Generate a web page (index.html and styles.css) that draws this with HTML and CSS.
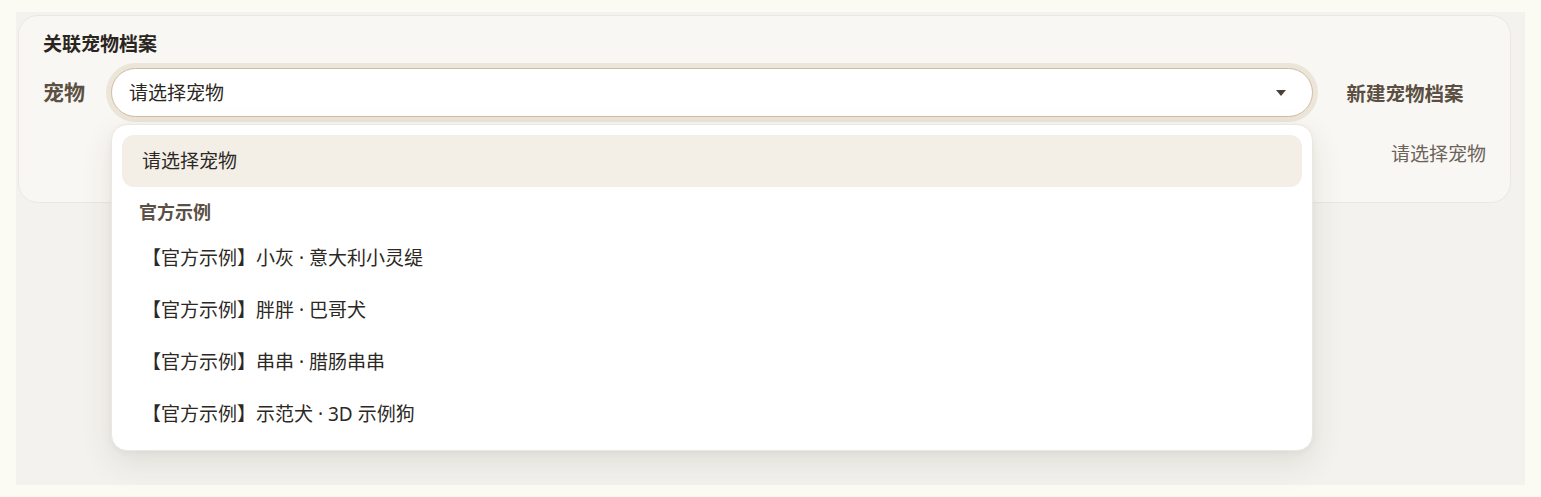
FILE: index.html
```html
<!DOCTYPE html>
<html lang="zh-CN">
<head>
<meta charset="utf-8">
<title>关联宠物档案</title>
<link rel="stylesheet" href="styles.css">
</head>
<body>
<div class="panel">
  <section class="card">
    <h2 class="card-title">关联宠物档案</h2>
    <div class="pet-row">
      <label class="pet-label">宠物</label>
      <div class="select-wrap">
        <div class="select">
          <span class="select-value">请选择宠物</span>
          <span class="caret"></span>
        </div>
        <div class="dropdown">
          <div class="option active">请选择宠物</div>
          <div class="group-label">官方示例</div>
          <div class="option">【官方示例】小灰 · 意大利小灵缇</div>
          <div class="option">【官方示例】胖胖 · 巴哥犬</div>
          <div class="option">【官方示例】串串 · 腊肠串串</div>
          <div class="option">【官方示例】示范犬 · 3D 示例狗</div>
        </div>
      </div>
      <button class="new-btn" type="button">新建宠物档案</button>
    </div>
    <div class="hint">请选择宠物</div>
  </section>
</div>
</body>
</html>
```
FILE: styles.css
```css
* { box-sizing: border-box; }
html, body { margin: 0; padding: 0; }
body {
  background: #fbfaf3;
  font-family: "Noto Sans", "Noto Sans CJK SC", sans-serif;
  color: #2b2723;
}
.panel {
  margin: 12px 16px;
  height: 473px;
  background: #f3f2ee;
  padding: 3px 14px 0 2px;
}
.card {
  background: #f8f7f3;
  border: 1px solid #ebe8e1;
  border-radius: 20px;
  padding: 14px 23px 34px 24px;
}
.card-title {
  margin: 0;
  font-size: 19px;
  line-height: 28px;
  font-weight: 700;
  color: #2a2521;
}
.pet-row {
  margin-top: 10px;
  display: flex;
  align-items: center;
}
.pet-label {
  width: 68px;
  font-size: 21px;
  font-weight: 700;
  color: #5b5042;
  line-height: 30px;
  padding-bottom: 1px;
}
.select-wrap {
  position: relative;
  flex: 1;
}
.select {
  height: 49px;
  border: 1.5px solid #cfbd9f;
  border-radius: 25px;
  background: #fff;
  box-shadow: 0 0 0 5px #ebe5da;
  display: flex;
  align-items: center;
  justify-content: space-between;
  padding: 0 26px 0 17px;
}
.select-value {
  font-size: 19px;
  line-height: 28px;
  color: #2a2622;
}
.caret {
  width: 0;
  height: 0;
  border-left: 5.5px solid transparent;
  border-right: 5.5px solid transparent;
  border-top: 6px solid #4a4239;
}
.dropdown {
  position: absolute;
  left: 0;
  right: 0;
  top: 56px;
  background: #fff;
  border: 1px solid #ebe8e2;
  border-radius: 16px;
  padding: 10px;
  box-shadow: 0 12px 32px rgba(60, 50, 30, 0.10), 0 2px 6px rgba(60, 50, 30, 0.05);
  z-index: 10;
}
.option {
  height: 52px;
  display: flex;
  align-items: center;
  padding: 0 0 1px 20px;
  font-size: 19px;
  line-height: 28px;
  color: #2c2925;
  border-radius: 12px;
}
.option.active {
  background: #f3efe7;
}
.group-label {
  height: 45px;
  display: flex;
  align-items: center;
  padding: 4px 0 0 17px;
  font-size: 18px;
  line-height: 26px;
  font-weight: 700;
  color: #5a5045;
}
.new-btn {
  margin-left: 10px;
  width: 164px;
  height: 49px;
  border: 0;
  background: transparent;
  font-family: inherit;
  font-size: 19.5px;
  font-weight: 700;
  color: #5a4f42;
  padding: 0 0 1px;
  cursor: pointer;
}
.hint {
  margin-top: 23px;
  text-align: right;
  font-size: 19px;
  line-height: 28px;
  color: #6b6259;
  padding-right: 1px;
}
```
